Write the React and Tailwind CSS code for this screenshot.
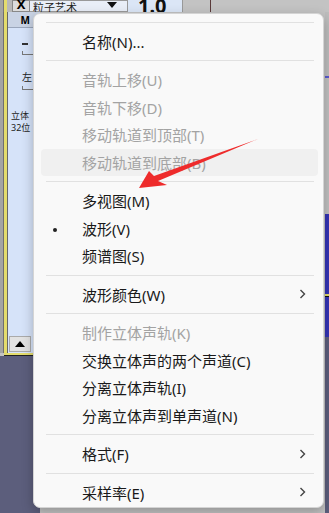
import React from "react";

const GROUPS = [
  [{ label: "名称(N)..." }],
  [
    { label: "音轨上移(U)", disabled: true },
    { label: "音轨下移(D)", disabled: true },
    { label: "移动轨道到顶部(T)", disabled: true },
    { label: "移动轨道到底部(B)", disabled: true, hover: true },
  ],
  [{ label: "多视图(M)" }, { label: "波形(V)", checked: true }, { label: "频谱图(S)" }],
  [{ label: "波形颜色(W)", sub: true }],
  [
    { label: "制作立体声轨(K)", disabled: true },
    { label: "交换立体声的两个声道(C)" },
    { label: "分离立体声轨(I)" },
    { label: "分离立体声到单声道(N)" },
  ],
  [{ label: "格式(F)", sub: true }],
  [{ label: "采样率(E)", sub: true }],
];

const Chevron = () => (
  <svg width="7" height="11" viewBox="0 0 7 11" className="absolute right-[12px] top-1/2 -translate-y-1/2">
    <path d="M1.5 1.5 L5.5 5.5 L1.5 9.5" fill="none" stroke="#444" strokeWidth="1.4" />
  </svg>
);

const Separator = () => (
  <div className="h-[11px] flex items-center pl-[12px] pr-[9px]">
    <div className="h-px w-full bg-[#e1e1e1]" />
  </div>
);

const MenuItem = ({ item }) => (
  <div className="h-[27.5px] pl-[7px] pr-[5px]">
    <div
      className={`relative h-full flex items-center pl-[41px] text-[15px] rounded-[4px] ${
        item.disabled ? "text-[#a3a3a3]" : "text-[#1a1a1a]"
      } ${item.hover ? "bg-[#f0f0f0]" : ""}`}
    >
      {item.checked && <span className="absolute left-[12px] top-[13px] w-[4px] h-[4px] rounded-full bg-[#222]" />}
      <span className="leading-none pt-[2px]">{item.label}</span>
      {item.sub && <Chevron />}
    </div>
  </div>
);

export default function App() {
  return (
    <div
      className="relative w-[329px] h-[513px] overflow-hidden bg-[#c3c3c3] flex flex-col"
      style={{ fontFamily: '"Noto Sans", "Noto Sans CJK SC", sans-serif' }}
    >
      {/* top track bar */}
      <div className="h-[12px] flex shrink-0 overflow-hidden">
        <div className="w-[4px] bg-[#a4a4a4] border-r border-[#777]" />
        <div className="w-[3px] bg-[#e4dc6c]" />
        <div className="w-[5px] bg-[#b8b8b8]" />
        <div className="w-[18px] bg-[#dcdcdc] border border-[#888] flex items-end justify-center text-[13px] font-bold leading-none text-black">
          X
        </div>
        <div className="w-[98px] bg-[#e9eef7] border-y border-r border-[#999] flex items-end justify-between px-[3px] text-[11px] leading-none text-[#222]">
          <span className="-mb-[2px]">粒子艺术</span>
          <svg width="10" height="6" viewBox="0 0 10 6" className="mb-[3px] mr-[7px]">
            <path d="M0 0 H10 L5 6 Z" fill="#111" />
          </svg>
        </div>
        <div className="w-[55px] bg-[#dbe6f6] border-r border-[#999] flex items-end pl-[10px] text-[20px] font-bold leading-none text-[#111]">
          <span className="-mb-[4px]">1.0</span>
        </div>
        <div className="w-[27px]" />
        <div className="w-px bg-[#5a3a3a]" />
      </div>

      <div className="flex-1 flex">
        {/* left track panel */}
        <div className="w-[40px] flex flex-col">
          <div className="h-[341px] flex">
            <div className="w-[4px] bg-[#a4a4a4] border-r border-[#6f6f6f]" />
            <div className="w-[3px] bg-[#e4dc6c]" />
            <div className="w-px bg-[#666]" />
            <div className="flex-1 bg-[#d6e3f9] flex flex-col">
              <div className="h-[16px] bg-[#c9d3e4] border-b border-[#9aa6bb] flex items-center justify-end pr-[10px] text-[10px] font-bold leading-none">
                M
              </div>
              <div className="pl-[14px] pt-[15px] text-[10px] leading-none text-[#222]">
                <div className="w-[6px] h-[2px] bg-[#333]" />
                <div className="mt-[6px] w-[12px] h-[4px] border-l border-b border-[#777]" />
                <div className="mt-[17px]">左</div>
                <div className="mt-[4px] w-[12px] h-[4px] border-l border-b border-[#777]" />
              </div>
              <div className="pl-[3px] mt-[20px] text-[9px] leading-[12px] text-[#222]">
                <div>立体</div>
                <div>32位</div>
              </div>
              <div className="flex-1" />
              <div className="h-[16px] mb-[1px] ml-[1px] w-[22px] bg-[#e2e2e2] border border-[#aaa] flex items-center justify-center">
                <svg width="10" height="6" viewBox="0 0 10 6">
                  <path d="M0 6 H10 L5 0 Z" fill="#000" />
                </svg>
              </div>
            </div>
          </div>
          <div className="h-[2px] bg-[#e4dc6c] ml-[4px]" />
          <div className="h-[1px] bg-[#222] ml-[4px]" />
          <div className="flex-1 bg-[#5c5e7c]" />
        </div>
        <div className="flex-1" />
        {/* right edge strip */}
        <div className="w-[4px] flex flex-col">
          <div className="h-[64px] bg-[#bdbdbd]" />
          <div className="h-[2px] bg-[#5a5ad0]" />
          <div className="h-[136px] bg-[#c0c0c0]" />
          <div className="h-[80px] bg-[#3434b4]" />
          <div className="h-[2px] bg-[#e4dc6c]" />
          <div className="h-[1px] bg-[#111]" />
          <div className="h-[40px] bg-[#3434b4]" />
          <div className="flex-1 bg-[#5c5e7c]" />
        </div>
      </div>

      {/* context menu */}
      <div className="absolute left-[33px] top-[13px] w-[291px] h-[495px] bg-[#f9f9f9] rounded-[7px] border border-[#d4d4d4] shadow-[0_4px_12px_rgba(0,0,0,0.25)] pt-[2.5px]">
        {GROUPS.map((group, gi) => (
          <React.Fragment key={gi}>
            <Separator />
            {group.map((item) => (
              <MenuItem key={item.label} item={item} />
            ))}
          </React.Fragment>
        ))}
      </div>

      {/* red annotation arrow */}
      <svg className="absolute left-0 top-0 pointer-events-none" width="329" height="513" viewBox="0 0 329 513">
        <polygon points="139,188 149,171 154,176 258,139 158,181 167,185" fill="#ee2b2b" />
      </svg>
    </div>
  );
}
